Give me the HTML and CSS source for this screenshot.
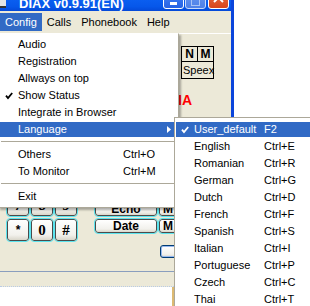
FILE: index.html
```html
<!DOCTYPE html>
<html lang="en">
<head>
    <meta charset="UTF-8">
    <title>DIAX v0.9.91(EN)</title>
    <link rel="stylesheet" href="styles.css">
</head>
<body>
    <div class="window">
        <div class="titlebar">
            <span class="app-icon"></span>
            <span class="title">DIAX v0.9.91(EN)</span>
            <div class="caption">
                <span class="cap-btn min"><span class="min-bar"></span></span>
                <span class="cap-btn max"><span class="max-box"></span></span>
                <span class="cap-btn close">
                    <svg width="19" height="19" viewBox="0 0 19 19"><path d="M5 4l9 9M14 4l-9 9" stroke="#fff" stroke-width="2"/></svg>
                </span>
            </div>
        </div>
        <div class="menubar">
            <span class="menu-title active">Config</span>
            <span class="menu-title">Calls</span>
            <span class="menu-title">Phonebook</span>
            <span class="menu-title">Help</span>
        </div>
        <div class="client">
            <div class="panel">
                <div class="dialpad">
                    <span class="key">1</span><span class="key">2</span><span class="key">3</span>
                    <span class="key">4</span><span class="key">5</span><span class="key">6</span>
                    <span class="key">7</span><span class="key">8</span><span class="key">9</span>
                    <span class="key small">*</span><span class="key">0</span><span class="key">#</span>
                </div>
                <div class="func-col">
                    <span class="fbtn">Call</span>
                    <span class="fbtn">Hold</span>
                    <span class="fbtn">Mute</span>
                    <span class="fbtn">Echo</span>
                    <span class="fbtn">Date</span>
                </div>
                <div class="side-col">
                    <span class="fbtn">M</span>
                    <span class="fbtn">M</span>
                    <span class="fbtn default"></span>
                </div>
            </div>
            <div class="info">
                <div class="codecs">
                    <span class="cell">N</span>
                    <span class="cell last">M</span>
                    <span class="cell wide">Speex</span>
                </div>
                <div class="brand"><span>DIA</span></div>
            </div>
        </div>
        <div class="statusbar"></div>
    </div>
    <div class="behind"></div>

    <div class="menu config-menu">
        <div class="item"><span class="mark"></span><span class="label">Audio</span></div>
        <div class="item"><span class="mark"></span><span class="label">Registration</span></div>
        <div class="item"><span class="mark"></span><span class="label">Allways on top</span></div>
        <div class="item">
            <span class="mark"><svg width="8" height="8" viewBox="0 0 8 8"><path d="M1 3.6l2 2.4L7.2 1" fill="none" stroke="currentColor" stroke-width="1.8"/></svg></span>
            <span class="label">Show Status</span>
        </div>
        <div class="item"><span class="mark"></span><span class="label">Integrate in Browser</span></div>
        <div class="item selected">
            <span class="mark"></span><span class="label">Language</span>
            <svg class="arrow" width="4" height="7" viewBox="0 0 4 7"><path d="M0 0L4 3.5L0 7z" fill="currentColor"/></svg>
        </div>
        <div class="sep"></div>
        <div class="item"><span class="mark"></span><span class="label">Others</span><span class="key-hint">Ctrl+O</span></div>
        <div class="item"><span class="mark"></span><span class="label">To Monitor</span><span class="key-hint">Ctrl+M</span></div>
        <div class="sep"></div>
        <div class="item"><span class="mark"></span><span class="label">Exit</span></div>
    </div>

    <div class="menu lang-menu">
        <div class="item selected">
            <span class="mark"><svg width="8" height="8" viewBox="0 0 8 8"><path d="M1 3.6l2 2.4L7.2 1" fill="none" stroke="currentColor" stroke-width="1.8"/></svg></span>
            <span class="label">User_default</span><span class="key-hint">F2</span>
        </div>
        <div class="item"><span class="mark"></span><span class="label">English</span><span class="key-hint">Ctrl+E</span></div>
        <div class="item"><span class="mark"></span><span class="label">Romanian</span><span class="key-hint">Ctrl+R</span></div>
        <div class="item"><span class="mark"></span><span class="label">German</span><span class="key-hint">Ctrl+G</span></div>
        <div class="item"><span class="mark"></span><span class="label">Dutch</span><span class="key-hint">Ctrl+D</span></div>
        <div class="item"><span class="mark"></span><span class="label">French</span><span class="key-hint">Ctrl+F</span></div>
        <div class="item"><span class="mark"></span><span class="label">Spanish</span><span class="key-hint">Ctrl+S</span></div>
        <div class="item"><span class="mark"></span><span class="label">Italian</span><span class="key-hint">Ctrl+I</span></div>
        <div class="item"><span class="mark"></span><span class="label">Portuguese</span><span class="key-hint">Ctrl+P</span></div>
        <div class="item"><span class="mark"></span><span class="label">Czech</span><span class="key-hint">Ctrl+C</span></div>
        <div class="item"><span class="mark"></span><span class="label">Thai</span><span class="key-hint">Ctrl+T</span></div>
    </div>
</body>
</html>
```

FILE: styles.css
```css
body {
    margin: 0;
    width: 310px;
    height: 306px;
    overflow: hidden;
    position: relative;
    background: #fff;
    font-family: "Liberation Sans", Arial, sans-serif;
    font-size: 11px;
    color: #000;
}
.window {
    width: 231px;
    background: #ECE9D8;
    border-right: 3px solid #0B45DB;
    border-bottom: 1px dotted #B9CBE6;
}
.titlebar {
    height: 11px;
    display: flex;
    align-items: flex-end;
    overflow: hidden;
    background: linear-gradient(#0A5EF0, #0657EA 60%, #0449D8);
    color: #fff;
}
.app-icon {
    flex: none;
    width: 6px;
    height: 6px;
    margin: 0 13px 3px 0;
    background: #E4E4E4;
    border-bottom: 2px solid #333;
}
.title {
    font-weight: bold;
    font-size: 13px;
    line-height: 13px;
    padding-bottom: 1px;
    white-space: nowrap;
}
.caption {
    margin-left: auto;
    margin-right: 2px;
    margin-bottom: 2px;
    display: flex;
    gap: 1px;
}
.cap-btn {
    box-sizing: border-box;
    width: 21px;
    height: 21px;
    border: 1px solid #fff;
    border-radius: 3px;
    background: linear-gradient(#4A8AF8, #2763E4);
    position: relative;
    display: block;
}
.cap-btn.max {
    margin-right: 1px;
    background: linear-gradient(#6D9CF2, #4E80E8);
    border-color: #C9D9F8;
}
.cap-btn.close {
    background: linear-gradient(#E9764A, #D8461C);
}
.cap-btn svg {
    display: block;
}
.min-bar {
    display: block;
    width: 7px;
    height: 3px;
    margin: 13px 0 0 6px;
    background: #fff;
}
.max-box {
    display: block;
    width: 7px;
    height: 7px;
    margin: 7px 0 0 5px;
    border: 1px solid #A9C3F6;
    border-top-width: 2px;
}
.menubar {
    height: 20px;
    padding-top: 2px;
    display: flex;
    align-items: flex-start;
    border-bottom: 1px solid #fff;
}
.menu-title {
    height: 18px;
    line-height: 18px;
    padding: 0 5px;
}
.menu-title.active {
    background: #316AC5;
    color: #fff;
}
.client {
    height: 237px;
    display: flex;
}
.panel {
    flex: none;
    width: 181px;
    box-sizing: border-box;
    padding-left: 7px;
    display: flex;
    align-items: flex-start;
}
.dialpad {
    margin-top: 110px;
    display: grid;
    grid-template-columns: 22px 22px 22px;
    column-gap: 2px;
    row-gap: 3px;
}
.key {
    box-sizing: border-box;
    height: 22px;
    border: 1px solid #4B4B4B;
    border-radius: 3px;
    background: linear-gradient(#FFFFFF, #F2F1EC 75%, #D9D6CA);
    outline: 1px solid #5CE4EE;
    display: flex;
    align-items: center;
    justify-content: center;
    font-family: "Liberation Serif", serif;
    font-weight: bold;
    font-size: 15px;
}
.key.small {
    font-family: "Liberation Sans", sans-serif;
    font-size: 12px;
}
.func-col {
    margin: 117px 0 0 18px;
    width: 62px;
    display: flex;
    flex-direction: column;
    gap: 3px;
}
.fbtn {
    box-sizing: border-box;
    height: 14px;
    border: 1px solid #4B4B4B;
    border-radius: 3px;
    background: linear-gradient(#FFFFFF, #F2F1EC 75%, #D9D6CA);
    outline: 1px solid #5CE4EE;
    text-align: center;
    font-weight: bold;
    font-size: 12px;
    line-height: 12px;
}
.side-col {
    margin: 168px 0 0 2px;
    width: 22px;
    display: flex;
    flex-direction: column;
    gap: 3px;
}
.side-col .fbtn {
    text-align: left;
    padding-left: 3px;
}
.fbtn.default {
    height: 13px;
    margin: 9px 0 0 1px;
    outline: none;
    border-color: #003C74;
    box-shadow: inset 0 0 0 1px #97B8EE;
}
.info {
    flex: 1;
    padding-top: 12px;
}
.codecs {
    display: grid;
    grid-template-columns: 16px 15px;
    width: max-content;
    border: 1px solid #000;
}
.cell {
    height: 14px;
    line-height: 14px;
    border-right: 1px solid #000;
    border-bottom: 1px solid #000;
    text-align: center;
    font-weight: bold;
    font-size: 12px;
}
.cell.last {
    border-right: none;
}
.cell.wide {
    grid-column: 1 / 3;
    height: 16px;
    line-height: 16px;
    border: none;
    text-align: left;
    padding-left: 1px;
    font-weight: normal;
    font-size: 11px;
}
.brand {
    margin-top: 13px;
    width: 11px;
    height: 16px;
    display: flex;
    justify-content: flex-end;
    color: #F00;
    font-weight: bold;
    font-size: 14px;
    line-height: 16px;
    white-space: nowrap;
}
.statusbar {
    height: 14px;
    border-top: 1px solid #8A9EBE;
}
.behind {
    margin-left: 172px;
    width: 2px;
    height: 19px;
    background: #DDBA72;
}
.menu {
    position: absolute;
    box-sizing: border-box;
    background: #fff;
    border: 1px solid #ACA899;
    box-shadow: 2px 2px 2px rgba(0, 0, 0, 0.3);
}
.config-menu {
    top: 33px;
    left: -2px;
    width: 181px;
    padding: 2px 1px;
    border-top-color: #fff;
}
.lang-menu {
    top: 117px;
    left: 174px;
    width: 170px;
    padding: 3px 1px;
}
.item {
    height: 15px;
    padding: 1px 0;
    background-clip: content-box;
    display: flex;
    align-items: center;
    line-height: 15px;
    white-space: nowrap;
}
.item.selected {
    background-color: #316AC5;
    color: #fff;
}
.mark {
    flex: none;
    width: 18px;
    height: 15px;
    display: flex;
    align-items: center;
}
.mark svg {
    margin-left: 5px;
}
.config-menu .label {
    width: 105px;
}
.lang-menu .label {
    width: 70px;
}
.arrow {
    margin-left: auto;
    margin-right: 6px;
}
.sep {
    height: 1px;
    margin: 3px 1px 4px;
    background: #ACA899;
}
```
